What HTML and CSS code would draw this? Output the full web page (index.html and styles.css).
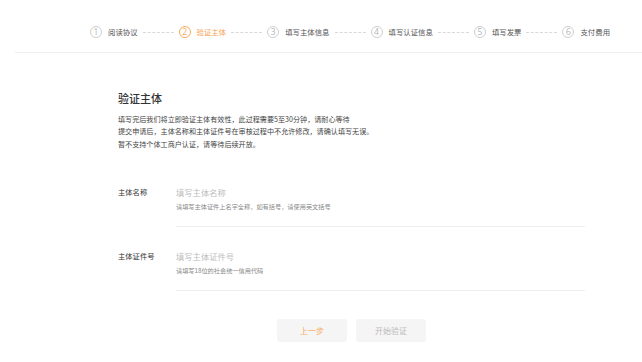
FILE: index.html
```html
<!DOCTYPE html>
<html lang="zh">
<head>
<meta charset="utf-8">
<title>验证主体</title>
<link rel="stylesheet" href="styles.css">
</head>
<body>
<header class="steps">
  <div class="step"><span class="num">1</span><span class="label">阅读协议</span></div>
  <span class="dash"></span>
  <div class="step active"><span class="num">2</span><span class="label">验证主体</span></div>
  <span class="dash"></span>
  <div class="step"><span class="num">3</span><span class="label">填写主体信息</span></div>
  <span class="dash"></span>
  <div class="step"><span class="num">4</span><span class="label">填写认证信息</span></div>
  <span class="dash"></span>
  <div class="step"><span class="num">5</span><span class="label">填写发票</span></div>
  <span class="dash"></span>
  <div class="step"><span class="num">6</span><span class="label">支付费用</span></div>
</header>
<main class="main">
  <h1 class="title">验证主体</h1>
  <p class="intro">填写完后我们将立即验证主体有效性，此过程需要5至30分钟，请耐心等待<br>提交申请后，主体名称和主体证件号在审核过程中不允许修改，请确认填写无误。<br>暂不支持个体工商户认证，请等待后续开放。</p>
  <div class="field first">
    <div class="field-label">主体名称</div>
    <div class="field-body">
      <input class="field-input" type="text" placeholder="填写主体名称">
      <div class="hint">请填写主体证件上名字全称，如有括号，请使用英文括号</div>
    </div>
  </div>
  <div class="field">
    <div class="field-label">主体证件号</div>
    <div class="field-body">
      <input class="field-input" type="text" placeholder="填写主体证件号">
      <div class="hint">请填写18位的社会统一信用代码</div>
    </div>
  </div>
  <div class="actions">
    <button class="btn btn-prev" type="button">上一步</button>
    <button class="btn btn-next" type="button">开始验证</button>
  </div>
</main>
</body>
</html>
```
FILE: styles.css
```css
* { box-sizing: border-box; }
html, body { margin: 0; padding: 0; background: #fff; }
body {
  font-family: "Noto Sans CJK SC", "Noto Sans", sans-serif;
  color: #333;
}
.steps {
  display: flex;
  align-items: center;
  margin-left: 15px;
  padding: 20px 0 8px 75px;
  height: 53px;
  border-bottom: 1px solid #eeeeee;
}
.step {
  display: flex;
  align-items: center;
  height: 24px;
}
.num {
  width: 12px;
  height: 12px;
  border: 1px solid #cfcfcf;
  border-radius: 50%;
  display: flex;
  align-items: center;
  justify-content: center;
  font-family: "Open Sans", sans-serif;
  font-size: 8.5px;
  line-height: 1;
  color: #b5b5b5;
}
.label {
  margin-left: 6px;
  font-size: 7.4px;
  line-height: 12px;
  color: #555;
  white-space: nowrap;
}
.step.active .num { border-color: #f8a95e; color: #f8a95e; }
.step.active .label { color: #f7a252; }
.dash {
  width: 31px;
  margin: 0 5px;
  border-top: 1px dashed #d9d9d9;
}
.main {
  padding-left: 118px;
}
.title {
  margin: 38px 0 0;
  font-size: 11px;
  line-height: 14px;
  font-weight: 500;
  color: #333;
}
.intro {
  margin: 8px 0 0;
  font-size: 7.1px;
  line-height: 12.4px;
  color: #444;
}
.field {
  display: flex;
  margin-top: 22px;
}
.field.first { margin-top: 35px; }
.field-label {
  width: 58px;
  flex: none;
  font-size: 7.3px;
  line-height: 14px;
  color: #333;
}
.field-body {
  width: 409px;
  padding-bottom: 14px;
  border-bottom: 1px solid #eeeeee;
}
.field-input {
  display: block;
  width: 100%;
  height: 14px;
  margin: 0;
  padding: 0;
  border: none;
  outline: none;
  background: transparent;
  font-family: inherit;
  font-size: 8.3px;
  line-height: 14px;
  color: #333;
}
.field-input::placeholder { color: #bdbdbd; }
.hint {
  margin-top: 3px;
  font-size: 6.2px;
  line-height: 10px;
  color: #888;
}
.actions {
  display: flex;
  gap: 9px;
  margin: 28px 0 0 159px;
}
.btn {
  width: 70px;
  height: 23px;
  padding: 0;
  border: none;
  border-radius: 3px;
  background: #f5f5f5;
  font-family: inherit;
  font-size: 8px;
  line-height: 23px;
  cursor: pointer;
}
.btn-prev { color: #f9a85a; }
.btn-next { color: #bbbbbb; }
```
